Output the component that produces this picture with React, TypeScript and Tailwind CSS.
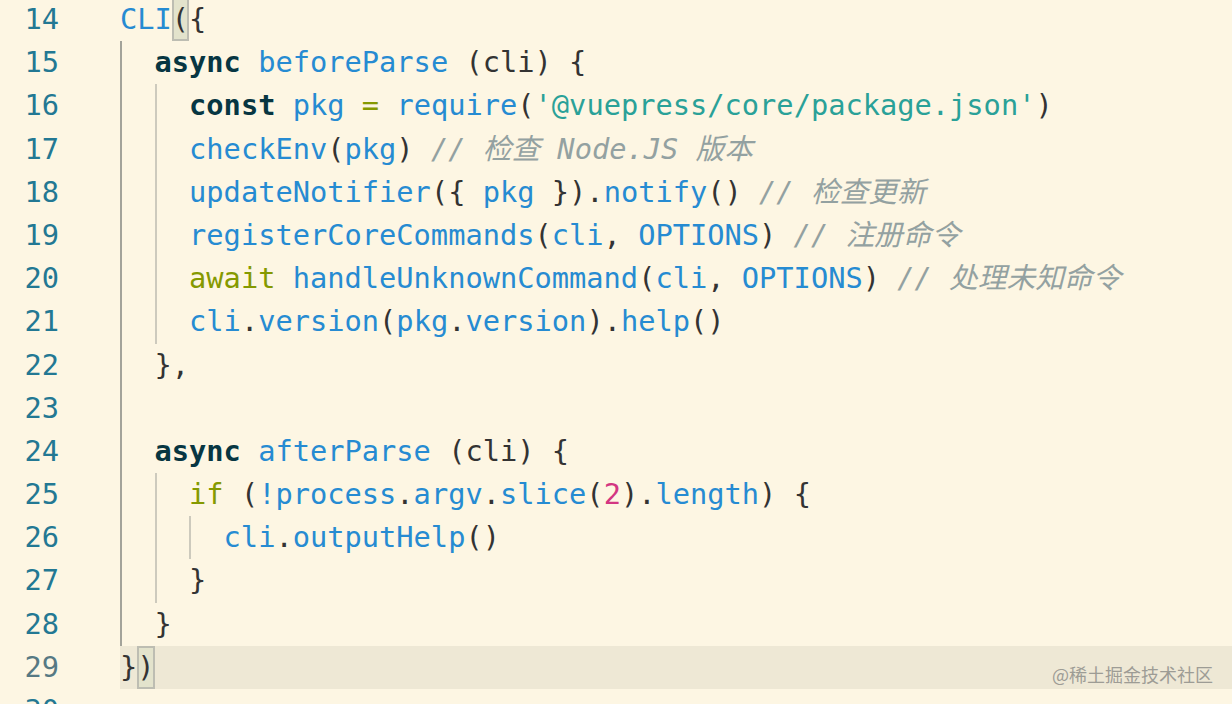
import React from 'react';

type Tok = [string, string] | [string, string, 'box'];

const kw = 'text-[#073642] font-bold';
const fn = 'text-[#268bd2]';
const p = 'text-[#333333]';
const str = 'text-[#2aa198]';
const ctl = 'text-[#859900]';
const num = 'text-[#d33682]';
const cm = 'text-[#93a1a1] italic';

// guides: 'a' = active indent guide, 'd' = dim one
const lines: { n: number; guides: string[]; toks: Tok[]; current?: boolean }[] = [
    { n: 14, guides: [], toks: [['CLI', fn], ['(', p, 'box'], ['{', p]] },
    { n: 15, guides: ['a'], toks: [['async', kw], [' ', p], ['beforeParse', fn], [' (cli) {', p]] },
    {
        n: 16, guides: ['a', 'd'], toks: [
            ['const', kw], [' ', p], ['pkg', fn], [' ', p], ['=', ctl], [' ', p], ['require', fn], ['(', p],
            ["'@vuepress/core/package.json'", str], [')', p],
        ],
    },
    { n: 17, guides: ['a', 'd'], toks: [['checkEnv', fn], ['(', p], ['pkg', fn], [')', p], [' // 检查 Node.JS 版本', cm]] },
    {
        n: 18, guides: ['a', 'd'], toks: [
            ['updateNotifier', fn], ['({ ', p], ['pkg', fn], [' }).', p], ['notify', fn], ['()', p], [' // 检查更新', cm],
        ],
    },
    {
        n: 19, guides: ['a', 'd'], toks: [
            ['registerCoreCommands', fn], ['(', p], ['cli', fn], [', ', p], ['OPTIONS', fn], [')', p], [' // 注册命令', cm],
        ],
    },
    {
        n: 20, guides: ['a', 'd'], toks: [
            ['await', ctl], [' ', p], ['handleUnknownCommand', fn], ['(', p], ['cli', fn], [', ', p], ['OPTIONS', fn], [')', p],
            [' // 处理未知命令', cm],
        ],
    },
    {
        n: 21, guides: ['a', 'd'], toks: [
            ['cli', fn], ['.', p], ['version', fn], ['(', p], ['pkg', fn], ['.', p], ['version', fn], [').', p], ['help', fn], ['()', p],
        ],
    },
    { n: 22, guides: ['a'], toks: [['},', p]] },
    { n: 23, guides: ['a'], toks: [] },
    { n: 24, guides: ['a'], toks: [['async', kw], [' ', p], ['afterParse', fn], [' (cli) {', p]] },
    {
        n: 25, guides: ['a', 'd'], toks: [
            ['if', ctl], [' (', p], ['!process', fn], ['.', p], ['argv', fn], ['.', p], ['slice', fn], ['(', p], ['2', num], [').', p],
            ['length', fn], [') {', p],
        ],
    },
    { n: 26, guides: ['a', 'd', 'd'], toks: [['cli', fn], ['.', p], ['outputHelp', fn], ['()', p]] },
    { n: 27, guides: ['a', 'd'], toks: [['}', p]] },
    { n: 28, guides: ['a'], toks: [['}', p]] },
    { n: 29, guides: [], toks: [['}', p], [')', p, 'box']], current: true },
    { n: 30, guides: [], toks: [] },
];

const App: React.FC = () => {
    return (
        <div className="relative w-[1232px] h-[704px] overflow-hidden bg-[#fdf6e3] font-['DejaVu_Sans_Mono','Noto_Sans_CJK_SC',monospace] text-[28.7px] leading-[43.2px]">
            <div className="-mt-[2px] flex flex-col">
                {lines.map(line => (
                    <div key={line.n} className="flex h-[43.2px]">
                        <div
                            className={
                                'w-[59px] shrink-0 text-right ' +
                                (line.current ? 'text-[#567983]' : 'text-[#237893]')
                            }
                        >
                            {line.n}
                        </div>
                        <div className="w-[61px] shrink-0" />
                        <div className={'flex flex-1 ' + (line.current ? 'bg-[#eee8d5]' : '')}>
                            {line.guides.map((g, i) => (
                                <span
                                    key={i}
                                    className={
                                        'w-[2ch] shrink-0 border-l-2 ' +
                                        (g === 'a' ? 'border-[#a3a39a]' : 'border-[#cdcabd]')
                                    }
                                />
                            ))}
                            {line.toks.map((t, i) => (
                                <span
                                    key={i}
                                    className={
                                        'block whitespace-pre ' + t[1] +
                                        (t[2] === 'box' ? ' bg-[#e3e3cc] shadow-[inset_0_0_0_2px_#bdbdb2]' : '')
                                    }
                                >
                                    {t[0]}
                                </span>
                            ))}
                        </div>
                    </div>
                ))}
            </div>
            <div className="absolute top-[662px] right-[19px] text-[18px] leading-[24px] text-[#9d9c95] font-['Noto_Sans_CJK_SC',sans-serif]">
                @稀土掘金技术社区
            </div>
        </div>
    );
};

export default App;
